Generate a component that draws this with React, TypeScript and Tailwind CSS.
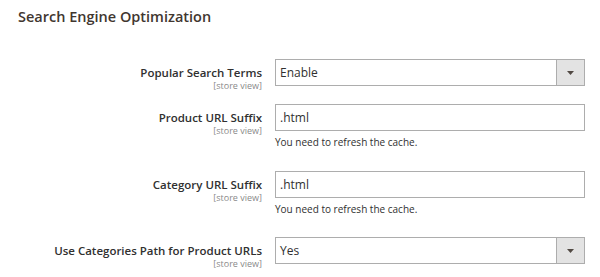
import React from 'react';

type Row = {
  label: string;
  value: string;
  kind: 'select' | 'input';
  note?: string;
  className: string;
};

const rows: Row[] = [
  { label: 'Popular Search Terms', value: 'Enable', kind: 'select', className: 'mt-[32px]' },
  {
    label: 'Product URL Suffix',
    value: '.html',
    kind: 'input',
    note: 'You need to refresh the cache.',
    className: 'mt-[13px]',
  },
  {
    label: 'Category URL Suffix',
    value: '.html',
    kind: 'input',
    note: 'You need to refresh the cache.',
    className: 'mt-[22px]',
  },
  { label: 'Use Categories Path for Product URLs', value: 'Yes', kind: 'select', className: 'mt-[21px]' },
];

const Field = ({ row }: { row: Row }) => (
  <div className={`flex items-start ${row.className}`}>
    <div className="w-[262px] shrink-0 text-right">
      <div className="pt-[6px] text-[11.5px] leading-[16px] font-semibold text-[#303030]">{row.label}</div>
      <div className="text-[9px] leading-[10px] text-[#8a8a8a]">[store view]</div>
    </div>
    <div className="ml-[13px] w-[310px]">
      <div className="flex h-[27px] border border-[#adadad] bg-white">
        <div className="flex-grow pl-[4px] text-[12px] leading-[25px] text-[#303030]">{row.value}</div>
        {row.kind === 'select' && (
          <div className="flex w-[28px] items-center justify-center border-l border-[#adadad] bg-[#e3e3e3]">
            <svg width="7" height="4" viewBox="0 0 7 4">
              <path d="M0 0h7L3.5 4z" fill="#514943" />
            </svg>
          </div>
        )}
      </div>
      {row.note && (
        <div className="mt-[4px] text-[10px] leading-[14px] text-[#303030]">{row.note}</div>
      )}
    </div>
  </div>
);

export default function App() {
  return (
    <div className="h-[277px] w-[600px] overflow-hidden bg-white font-['Open_Sans',sans-serif]">
      <div className="pl-[18px] pt-[7px] text-[14.5px] leading-[20px] font-semibold text-[#41362f]">
        Search Engine Optimization
      </div>
      {rows.map((row) => (
        <Field key={row.label} row={row} />
      ))}
    </div>
  );
}
